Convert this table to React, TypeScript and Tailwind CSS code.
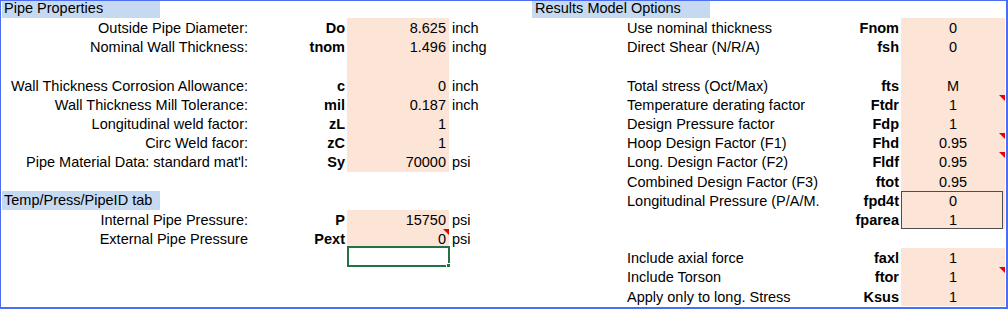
type LeftItem = {
  header?: string;
  label?: string;
  code?: string;
  value?: string;
  unit?: string;
  peach?: boolean;
  note?: boolean;
  selected?: boolean;
};

type RightItem = {
  label?: string;
  code?: string;
  value?: string;
  peach?: boolean;
  note?: boolean;
  box?: "top" | "bottom";
};

const leftRows: LeftItem[] = [
  { label: "Outside Pipe Diameter:", code: "Do", value: "8.625", unit: "inch", peach: true },
  { label: "Nominal Wall Thickness:", code: "tnom", value: "1.496", unit: "inchg", peach: true },
  { peach: true },
  { label: "Wall Thickness Corrosion Allowance:", code: "c", value: "0", unit: "inch", peach: true },
  { label: "Wall Thickness Mill Tolerance:", code: "mil", value: "0.187", unit: "inch", peach: true },
  { label: "Longitudinal weld factor:", code: "zL", value: "1", peach: true },
  { label: "Circ Weld facor:", code: "zC", value: "1", peach: true },
  { label: "Pipe Material Data: standard mat'l:", code: "Sy", value: "70000", unit: "psi", peach: true },
  {},
  { header: "Temp/Press/PipeID tab" },
  { label: "Internal Pipe Pressure:", code: "P", value: "15750", unit: "psi", peach: true },
  { label: "External Pipe Pressure", code: "Pext", value: "0", unit: "psi", peach: true, note: true },
  { selected: true },
  {},
  {},
];

const rightRows: RightItem[] = [
  { label: "Use nominal thickness", code: "Fnom", value: "0", peach: true },
  { label: "Direct Shear (N/R/A)", code: "fsh", value: "0", peach: true },
  { peach: true },
  { label: "Total stress (Oct/Max)", code: "fts", value: "M", peach: true },
  { label: "Temperature derating factor", code: "Ftdr", value: "1", peach: true, note: true },
  { label: "Design Pressure factor", code: "Fdp", value: "1", peach: true },
  { label: "Hoop Design Factor (F1)", code: "Fhd", value: "0.95", peach: true, note: true },
  { label: "Long. Design Factor (F2)", code: "Fldf", value: "0.95", peach: true, note: true },
  { label: "Combined Design Factor (F3)", code: "ftot", value: "0.95", peach: true },
  { label: "Longitudinal Pressure (P/A/M.", code: "fpd4t", value: "0", peach: true, box: "top" },
  { code: "fparea", value: "1", peach: true, box: "bottom" },
  {},
  { label: "Include axial force", code: "faxl", value: "1", peach: true },
  { label: "Include Torson", code: "ftor", value: "1", peach: true, note: true },
  { label: "Apply only to long. Stress", code: "Ksus", value: "1", peach: true },
];

function Note() {
  return (
    <span className="absolute right-0 top-0 h-0 w-0 border-l-[6px] border-t-[6px] border-l-transparent border-t-[#e60000]" />
  );
}

function LeftRow({ row }: { row: LeftItem }) {
  if (row.header) {
    return (
      <div className="h-[19.2px] pl-px">
        <div className="h-full w-[158px] bg-[#c5d9f1] pl-[2px] leading-[18.2px]">{row.header}</div>
      </div>
    );
  }
  return (
    <div className="grid h-[19.2px] grid-cols-[248px_98px_102px_1fr] leading-[18.2px]">
      <div className="whitespace-nowrap pr-px pt-px text-right">{row.label}</div>
      <div className="pr-[2px] pt-px text-right font-bold">{row.code}</div>
      <div className={`relative pr-[3px] pt-px text-right ${row.peach ? "bg-[#fce4d6]" : ""}`}>
        {row.value}
        {row.note && <Note />}
        {row.selected && (
          <div className="absolute -right-px -top-[2px] bottom-0 left-0 border-2 border-[#217346]">
            <span className="absolute -bottom-[3px] -right-[3px] h-[5px] w-[5px] border border-white bg-[#217346]" />
          </div>
        )}
      </div>
      <div className="whitespace-nowrap pl-[3px] pt-px">{row.unit}</div>
    </div>
  );
}

function RightRow({ row }: { row: RightItem }) {
  return (
    <div className="grid h-[19.2px] grid-cols-[97px_185px_89px_104px] leading-[18.2px]">
      <div />
      <div className="whitespace-nowrap pt-px">{row.label}</div>
      <div className="pr-[2px] pt-px text-right font-bold">{row.code}</div>
      <div className={`relative pt-px text-center ${row.peach ? "bg-[#fce4d6]" : ""}`}>
        {row.value}
        {row.note && <Note />}
        {row.box === "top" && (
          <span className="absolute bottom-0 left-0 right-[2px] top-0 border-x border-t border-[#4d4d4d]" />
        )}
        {row.box === "bottom" && (
          <span className="absolute bottom-0 left-0 right-[2px] top-0 border-x border-b border-[#4d4d4d]" />
        )}
      </div>
    </div>
  );
}

export default function App() {
  return (
    <div className="flex h-[309px] w-[1008px] border-b-2 border-l border-r-2 border-t border-[#4c6ef5] bg-white font-['Liberation_Sans',Arial,sans-serif] text-[14.5px] text-black">
      {/* Pipe properties side */}
      <div className="w-[529px]">
        <div className="h-[17px] pl-px">
          <div className="h-full w-[158px] bg-[#c5d9f1] pl-[2px] leading-[15px]">Pipe Properties</div>
        </div>
        {leftRows.map((row, i) => (
          <LeftRow key={i} row={row} />
        ))}
      </div>

      {/* Results model options side */}
      <div className="flex-1">
        <div className="h-[17px] pl-[2px]">
          <div className="h-full w-[178px] bg-[#c5d9f1] pl-[3px] leading-[15px]">Results Model Options</div>
        </div>
        {rightRows.map((row, i) => (
          <RightRow key={i} row={row} />
        ))}
      </div>
    </div>
  );
}
